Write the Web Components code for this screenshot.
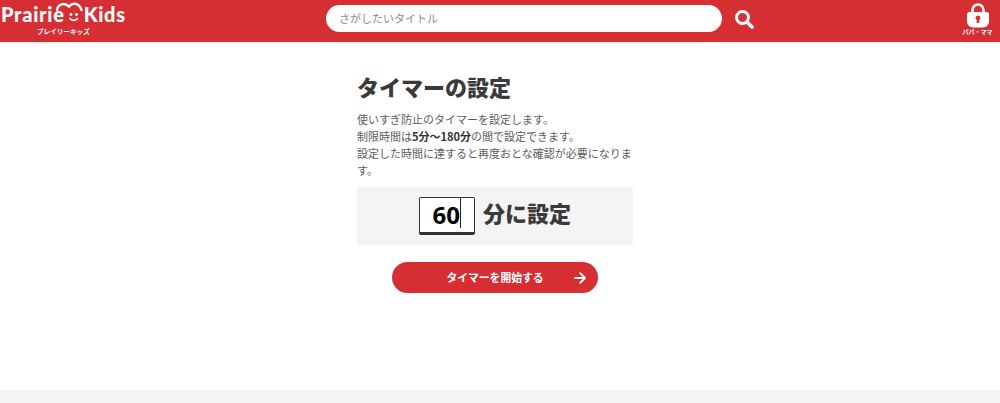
<!DOCTYPE html>
<html lang="ja">
<head>
<meta charset="utf-8">
<title>タイマーの設定</title>
<style>
	html, body { margin: 0; height: 100%; overflow: hidden; }
	body { font-family: "Noto Sans CJK JP", "Noto Sans", sans-serif; color: #3a3a3a; background: #fff; }
</style>
</head>
<body>
<pk-page>
	<pk-header slot="header"></pk-header>
	<pk-timer></pk-timer>
</pk-page>

<script>
const FONT = '"Noto Sans CJK JP", "Noto Sans", sans-serif';

class PkPage extends HTMLElement {
	constructor() {
		super().attachShadow({ mode: 'open' });
		this.shadowRoot.innerHTML = /*html*/ `
			<style>
				:host { display: flex; flex-direction: column; height: 403px; }
				main { flex: 1; display: flex; justify-content: center; padding-top: 29px; }
				footer { height: 13px; background: #f4f4f4; }
			</style>
			<slot name="header"></slot>
			<main><slot></slot></main>
			<footer></footer>`;
	}
}

class PkLogo extends HTMLElement {
	constructor() {
		super().attachShadow({ mode: 'open' });
		this.shadowRoot.innerHTML = /*html*/ `
			<style>
				:host { display: block; width: 130px; height: 42px; color: #fff; font-family: Lato, sans-serif; overflow: hidden; }
				.wrap { display: flex; flex-direction: column; align-items: flex-start; }
				.name { display: flex; align-items: flex-start; height: 27px; padding-left: 1px; font-size: 20px; font-weight: 900; letter-spacing: .7px; line-height: 29px; }
				.name svg { display: block; margin: 2px 1px 0 -11px; flex: none; }
				.sub { margin: 0 0 0 37px; font: 700 6.600px/9px ${FONT}; white-space: nowrap; }
			</style>
			<div class="wrap">
				<div class="name">
					<span>Prairie</span>
					<svg width="29" height="21" viewBox="0 0 29 21" fill="none" stroke="#fff" stroke-linecap="round">
						<path d="M3 8C4 2 10 0 15 4.500C19 0 25 1 27.500 8" stroke-width="2.400"/>
						<circle cx="17" cy="12.500" r="1.400" fill="#fff" stroke="none"/>
						<circle cx="22.500" cy="12.500" r="1.400" fill="#fff" stroke="none"/>
						<path d="M16 16.500C18 19 21.500 19 23.500 16.500" stroke-width="1.600"/>
					</svg>
					<span>Kids</span>
				</div>
				<div class="sub">プレイリーキッズ</div>
			</div>`;
	}
}

class PkSearch extends HTMLElement {
	constructor() {
		super().attachShadow({ mode: 'open' });
		this.shadowRoot.innerHTML = /*html*/ `
			<style>
				:host { display: flex; align-items: center; gap: 12px; }
				.box { width: 383px; height: 27px; padding-left: 13px; background: #fff; border-radius: 14px; font: 11px/27px ${FONT}; color: #8c8c8c; }
				svg { display: block; }
			</style>
			<div class="box">さがしたいタイトル</div>
			<svg width="20" height="20" viewBox="0 0 20 20" fill="none" stroke="#fff">
				<circle cx="8.500" cy="8.500" r="6" stroke-width="3"/>
				<path d="M13 13l5 5" stroke-width="3.600" stroke-linecap="round"/>
			</svg>`;
	}
}

class PkParentLock extends HTMLElement {
	constructor() {
		super().attachShadow({ mode: 'open' });
		this.shadowRoot.innerHTML = /*html*/ `
			<style>
				:host { display: flex; flex-direction: column; align-items: center; width: 32px; color: #fff; }
				svg { display: block; margin-top: 3px; }
				span { margin-top: -1px; font: 700 6px/9px ${FONT}; white-space: nowrap; }
			</style>
			<svg width="22" height="25" viewBox="0 0 22 25">
				<path d="M5.500 11V7a5.500 5.500 0 0 1 11 0V11" fill="none" stroke="#fff" stroke-width="2.600"/>
				<path fill-rule="evenodd" fill="#fff" d="M2.500 9h17a2.500 2.500 0 0 1 2.500 2.500v7a6 6 0 0 1-6 6H6a6 6 0 0 1-6-6v-7A2.500 2.500 0 0 1 2.500 9zM11 12.500a2.500 2.500 0 0 0-1.300 4.600V20h2.600v-2.900A2.500 2.500 0 0 0 11 12.500z"/>
			</svg>
			<span>パパ・ママ</span>`;
	}
}

class PkHeader extends HTMLElement {
	constructor() {
		super().attachShadow({ mode: 'open' });
		this.shadowRoot.innerHTML = /*html*/ `
			<style>
				:host { display: grid; grid-template-columns: 326px 1fr auto; height: 42px; padding-right: 6.500px; background: #d62f33; box-shadow: 0 1px 0 #eee; }
				pk-search { margin-top: 5px; align-self: start; }
			</style>
			<pk-logo></pk-logo>
			<pk-search></pk-search>
			<pk-parent-lock></pk-parent-lock>`;
	}
}

class PkMinutes extends HTMLElement {
	constructor() {
		super().attachShadow({ mode: 'open' });
		this.shadowRoot.innerHTML = /*html*/ `
			<style>
				:host { display: flex; align-items: center; justify-content: center; gap: 8px; height: 58px; background: #f4f4f4; border-radius: 2px; }
				.field { box-sizing: border-box; width: 56px; height: 38px; margin-bottom: 1px; display: flex; justify-content: flex-end; align-items: flex-start; padding-right: 13px; background: #fff; border: 1px solid #333; border-bottom-width: 3px; border-radius: 2px; color: #000; font: 700 24px/33px "Open Sans", sans-serif; }
				.caret { width: 1px; height: 30px; background: #222; }
				.unit { margin-bottom: 8px; font: 900 22px/30px ${FONT}; color: #3a3a3a; }
			</style>
			<div class="field"><span>${this.getAttribute('value') || 60}</span><i class="caret"></i></div>
			<div class="unit">分に設定</div>`;
	}
}

class PkButton extends HTMLElement {
	constructor() {
		super().attachShadow({ mode: 'open' });
		this.shadowRoot.innerHTML = /*html*/ `
			<style>
				:host { display: block; position: relative; width: 206px; height: 31px; background: #d62f33; border-radius: 16px; color: #fff; font: 700 10.800px/30px ${FONT}; text-align: center; }
				svg { position: absolute; right: 12px; top: 10px; }
			</style>
			<slot></slot>
			<svg width="12" height="12" viewBox="0 0 12 12" fill="none" stroke="#fff" stroke-width="1.800" stroke-linecap="round" stroke-linejoin="round">
				<path d="M1 6h10M6.200 1.200L11 6l-4.800 4.800"/>
			</svg>`;
	}
}

class PkTimer extends HTMLElement {
	constructor() {
		super().attachShadow({ mode: 'open' });
		this.shadowRoot.innerHTML = /*html*/ `
			<style>
				:host { display: flex; flex-direction: column; box-sizing: border-box; width: 276px; margin-left: -10px; }
				h1 { margin: 0 0 10px; font: 900 22px/30px ${FONT}; color: #3a3a3a; }
				p { margin: 0 0 8px; font: 400 11px/17px ${FONT}; color: #5c5c5c; }
				b { font-weight: 700; color: #333; }
				pk-button { align-self: center; margin-top: 17px; }
			</style>
			<h1>タイマーの設定</h1>
			<p>使いすぎ防止のタイマーを設定します。<br>制限時間は<b>5分〜180分</b>の間で設定できます。<br>設定した時間に達すると再度おとな確認が必要になります。</p>
			<pk-minutes value="60"></pk-minutes>
			<pk-button>タイマーを開始する</pk-button>`;
	}
}

customElements.define('pk-page', PkPage);
customElements.define('pk-logo', PkLogo);
customElements.define('pk-search', PkSearch);
customElements.define('pk-parent-lock', PkParentLock);
customElements.define('pk-header', PkHeader);
customElements.define('pk-minutes', PkMinutes);
customElements.define('pk-button', PkButton);
customElements.define('pk-timer', PkTimer);
</script>
</body>
</html>
